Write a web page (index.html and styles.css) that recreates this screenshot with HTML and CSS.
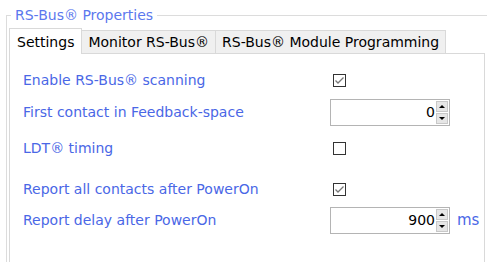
FILE: index.html
```html
<!DOCTYPE html>
<html lang="en">
<head>
    <meta charset="UTF-8">
    <title>RS-Bus Properties</title>
    <link rel="stylesheet" href="styles.css">
</head>
<body>
    <fieldset class="group">
        <legend>RS-Bus® Properties</legend>
        <div class="tabs">
            <div class="tab active">Settings</div>
            <div class="tab">Monitor RS-Bus®</div>
            <div class="tab">RS-Bus® Module Programming</div>
        </div>
        <div class="panel">
            <div class="row">
                <span class="label">Enable RS-Bus® scanning</span>
                <span class="check on">
                    <svg width="11" height="11" viewBox="0 0 11 11"><path d="M1.5 5.5 L4 8 L9.5 2.5" fill="none" stroke="#777" stroke-width="1.3"/></svg>
                </span>
            </div>
            <div class="row">
                <span class="label">First contact in Feedback-space</span>
                <div class="spin">
                    <span class="value">0</span>
                    <div class="arrows">
                        <span class="up"></span>
                        <span class="down"></span>
                    </div>
                </div>
            </div>
            <div class="row gap">
                <span class="label">LDT® timing</span>
                <span class="check"></span>
            </div>
            <div class="row gap2">
                <span class="label">Report all contacts after PowerOn</span>
                <span class="check on">
                    <svg width="11" height="11" viewBox="0 0 11 11"><path d="M1.5 5.5 L4 8 L9.5 2.5" fill="none" stroke="#777" stroke-width="1.3"/></svg>
                </span>
            </div>
            <div class="row tight">
                <span class="label">Report delay after PowerOn</span>
                <div class="spin">
                    <span class="value">900</span>
                    <div class="arrows">
                        <span class="up"></span>
                        <span class="down"></span>
                    </div>
                </div>
                <span class="unit">ms</span>
            </div>
        </div>
    </fieldset>
</body>
</html>
```

FILE: styles.css
```css
*{
    margin: 0px;
    padding: 0px;
    box-sizing: border-box;
}
body {
    background-color: #fff;
    font-family: 'DejaVu Sans', Verdana, sans-serif;
    font-size: 14px;
    width: 487px;
    height: 262px;
    overflow: hidden;
}
.group {
    border: 1px solid #dcdcdc;
    margin: 7px 0 0 6px;
    width: 500px;
    height: 300px;
    padding: 0 0 0 2px;
}
legend {
    color: #5b78ee;
    margin-left: 2px;
    padding: 0 4px 0 4px;
    line-height: 16px;
}
.tabs {
    display: flex;
    align-items: flex-end;
    height: 25px;
    margin-top: 5px;
}
.tab {
    background-color: #f0f0f0;
    border: 1px solid #d9d9d9;
    border-bottom: none;
    height: 23px;
    padding: 0 6px;
    line-height: 22px;
    color: #000;
    margin-left: -1px;
}
.tab.active {
    background-color: #fff;
    height: 26px;
    line-height: 26px;
    padding: 0 7px;
    margin-left: 0;
    margin-bottom: -1px;
    position: relative;
}
.panel {
    border: 1px solid #d9d9d9;
    width: 476px;
    height: 230px;
    padding: 12px 0 0 13px;
}
.row {
    display: flex;
    align-items: center;
    height: 28px;
    margin-bottom: 4px;
}
.row.gap {
    margin-top: 8px;
}
.row.gap2 {
    margin-top: 13px;
}
.row.tight {
    margin-top: -1px;
}
.label {
    color: #4a67e6;
    width: 307px;
}
.check {
    width: 13px;
    height: 13px;
    border: 1px solid #333;
    margin-left: 3px;
    display: flex;
    align-items: center;
    justify-content: center;
}
.spin {
    width: 120px;
    height: 27px;
    border: 1px solid #b4b4b4;
    display: flex;
    align-items: center;
    padding: 1px;
}
.value {
    flex: 1;
    text-align: right;
    color: #000;
    padding-right: 1px;
}
.arrows {
    width: 12px;
    height: 23px;
    display: flex;
    flex-direction: column;
    gap: 1px;
}
.up, .down {
    flex: 1;
    background-color: #e6e6e6;
    border: 1px solid #c8c8c8;
    display: flex;
    align-items: center;
    justify-content: center;
}
.up::after {
    content: '';
    border-left: 3px solid transparent;
    border-right: 3px solid transparent;
    border-bottom: 3px solid #000;
}
.down::after {
    content: '';
    border-left: 3px solid transparent;
    border-right: 3px solid transparent;
    border-top: 3px solid #000;
}
.unit {
    color: #4a67e6;
    font-size: 15px;
    margin-left: 7px;
}
```
